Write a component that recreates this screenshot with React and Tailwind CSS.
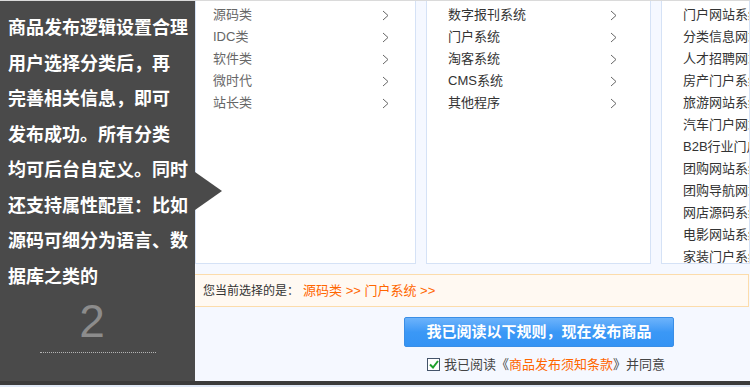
import React from 'react';

const FONT = { fontFamily: '"Liberation Sans", "Noto Sans CJK SC", sans-serif' };

const col1 = ['源码类', 'IDC类', '软件类', '微时代', '站长类'];
const col2 = ['数字报刊系统', '门户系统', '淘客系统', 'CMS系统', '其他程序'];
const col3 = [
  '门户网站系统',
  '分类信息网站',
  '人才招聘网站',
  '房产门户系统',
  '旅游网站系统',
  '汽车门户网站',
  'B2B行业门户',
  '团购网站系统',
  '团购导航网站',
  '网店源码系统',
  '电影网站系统',
  '家装门户系统',
];

const Chevron = () => (
  <svg width="7" height="11" viewBox="0 0 7 11" className="shrink-0">
    <polyline points="1,1 6,5.5 1,10" fill="none" stroke="#666" strokeWidth="1" />
  </svg>
);

const ListPanel = ({ items, width, pl, pr, textColor, chevron = true, grow = false }) => (
  <div
    className={`h-[263px] bg-white border border-t-0 border-[#d5e2f6] pt-[3px] ${grow ? 'flex-1 min-w-0 overflow-hidden' : 'shrink-0'} ${width} ${pl} ${pr}`}
  >
    {items.map((it) => (
      <div key={it} className="h-[22px] flex items-center justify-between">
        <span className={`text-[13px] whitespace-nowrap ${textColor}`}>{it}</span>
        {chevron && <Chevron />}
      </div>
    ))}
  </div>
);

export default function App() {
  const guide = [
    '商品发布逻辑设置合理',
    '用户选择分类后，再',
    '完善相关信息，即可',
    '发布成功。所有分类',
    '均可后台自定义。同时',
    '还支持属性配置：比如',
    '源码可细分为语言、数',
    '据库之类的',
  ];

  return (
    <div className="w-[750px] h-[387px] overflow-hidden bg-[#f5f8ff] flex flex-col" style={FONT}>
      <div className="h-px bg-[#dadada] shrink-0" />
      <div className="flex h-[380px] shrink-0">
        {/* guide panel */}
        <div className="relative w-[195px] shrink-0 bg-[#4a4a4a] pl-[8px] pt-[10px]">
          {guide.map((l) => (
            <div key={l} className="h-[35.5px] leading-[35.5px] text-[18px] font-bold text-white whitespace-nowrap">
              {l}
            </div>
          ))}
          <div className="mt-[1px] w-[168px] text-center text-[46px] leading-[50px] text-[#8c8c8c] font-light">2</div>
          <div className="ml-[32px] mt-[6px] w-[116px] border-t border-dotted border-[#b5b5b5]" />
          <div className="absolute left-[195px] top-[171px] w-0 h-0 border-y-[19px] border-y-transparent border-l-[27px] border-l-[#4a4a4a]" />
        </div>

        {/* content */}
        <div className="flex-1 min-w-0 flex flex-col">
          <div className="flex gap-[10px]">
            <ListPanel items={col1} width="w-[221px]" pl="pl-[17px]" pr="pr-[26px]" textColor="text-[#666]" />
            <ListPanel items={col2} width="w-[225px]" pl="pl-[21px]" pr="pr-[33px]" textColor="text-[#333]" />
            <ListPanel items={col3} width="" pl="pl-[21px]" pr="pr-0" textColor="text-[#333]" chevron={false} grow />
          </div>

          <div className="mt-[10px] h-[33px] mr-px bg-[#fff9f2] border-y border-r border-[#fcdcab] flex items-center pl-[8px] text-[12px]">
            <span className="text-[#333]">您当前选择的是：</span>
            <span className="ml-[4px] text-[13px] text-[#ff6600]">源码类 &gt;&gt; 门户系统 &gt;&gt;</span>
          </div>

          <div className="mt-[10px] ml-[209px] w-[270px] h-[30px] rounded-[2px] bg-gradient-to-b from-[#6cb3fb] via-[#3b98f6] to-[#3493f4] border border-[#3a8ee6] flex items-center justify-center text-white text-[15px] font-bold">
            我已阅读以下规则，现在发布商品
          </div>

          <div className="mt-[8px] ml-[232px] flex items-center text-[13px] text-[#444]">
            <span className="w-[13px] h-[13px] border border-[#44546a] bg-white flex items-center justify-center mr-[4px]">
              <svg width="10" height="9" viewBox="0 0 10 9">
                <polyline points="1,4.5 4,7.5 9,1" fill="none" stroke="#1fa02c" strokeWidth="2" />
              </svg>
            </span>
            <span>我已阅读《</span>
            <span className="text-[#ff6600]">商品发布须知条款</span>
            <span>》并同意</span>
          </div>
        </div>
      </div>
      <div className="h-[4px] bg-[#3b3b3b] shrink-0" />
      <div className="flex-1 bg-[#dfe8f6]" />
    </div>
  );
}
